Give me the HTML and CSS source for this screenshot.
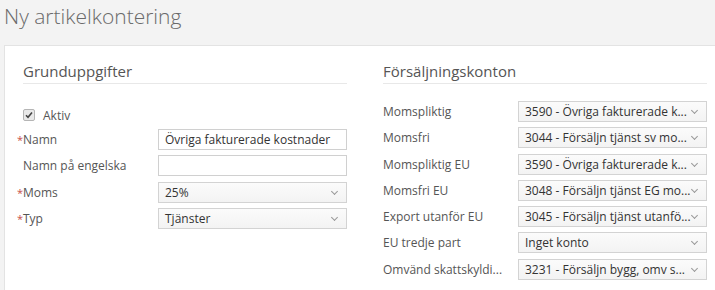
FILE: index.html
```html
<!DOCTYPE html>
<html lang="sv">
<head>
<meta charset="utf-8">
<title>Ny artikelkontering</title>
<link rel="stylesheet" href="styles.css">
</head>
<body>
<h1 class="page-title">Ny artikelkontering</h1>
<div class="panel">
  <div class="cols">
    <section class="col">
      <h2 class="section-title">Grunduppgifter</h2>
      <label class="check-row"><span class="checkbox"><svg width="8" height="8" viewBox="0 0 8 8"><path d="M1 4.2 L3 6.2 L7 1.5" fill="none" stroke="#444" stroke-width="1.6"/></svg></span>Aktiv</label>
      <div class="row"><span class="label req">Namn</span><span class="input">Övriga fakturerade kostnader</span></div>
      <div class="row"><span class="label">Namn på engelska</span><span class="input"></span></div>
      <div class="row"><span class="label req">Moms</span><span class="select">25%</span></div>
      <div class="row"><span class="label req">Typ</span><span class="select">Tjänster</span></div>
    </section>
    <section class="col">
      <h2 class="section-title">Försäljningskonton</h2>
      <div class="rows-right">
        <div class="row"><span class="label">Momspliktig</span><span class="select">3590 - Övriga fakturerade k...</span></div>
        <div class="row"><span class="label">Momsfri</span><span class="select">3044 - Försäljn tjänst sv mo...</span></div>
        <div class="row"><span class="label">Momspliktig EU</span><span class="select">3590 - Övriga fakturerade k...</span></div>
        <div class="row"><span class="label">Momsfri EU</span><span class="select">3048 - Försäljn tjänst EG mo...</span></div>
        <div class="row"><span class="label">Export utanför EU</span><span class="select">3045 - Försäljn tjänst utanfö...</span></div>
        <div class="row"><span class="label">EU tredje part</span><span class="select">Inget konto</span></div>
        <div class="row"><span class="label">Omvänd skattskyldi...</span><span class="select">3231 - Försäljn bygg, omv s...</span></div>
      </div>
    </section>
  </div>
</div>
</body>
</html>
```
FILE: styles.css
```css
html, body { margin: 0; padding: 0; }
body {
  background: #f3f3f3;
  font-family: "Open Sans", "Liberation Sans", sans-serif;
  color: #555;
  width: 715px;
  height: 290px;
  overflow: hidden;
}
.page-title {
  margin: 0;
  padding: 2px 0 0 4px;
  height: 45px;
  box-sizing: border-box;
  font-size: 21px;
  font-weight: 300;
  color: #6a6a6a;
  line-height: 28px;
}
.panel {
  margin-left: 4px;
  margin-right: -20px;
  background: #fff;
  border: 1px solid #e3e3e3;
  height: 245px;
  box-sizing: border-box;
  padding: 15px 18px 0 18px;
  overflow: hidden;
  border-bottom: 0;
}
.cols {
  display: flex;
  gap: 36px;
  width: 684px;
}
.col { width: 324px; }
.section-title {
  margin: 0;
  font-size: 15px;
  font-weight: 400;
  color: #555;
  line-height: 20px;
  padding-bottom: 2px;
  border-bottom: 1px solid #e8e8e8;
}
.check-row {
  display: flex;
  align-items: center;
  font-size: 12px;
  margin-top: 21px;
  height: 20px;
  color: #555;
}
.checkbox {
  width: 10px;
  height: 10px;
  border: 1px solid #b5b5b5;
  border-radius: 2px;
  background: #e9e9e9;
  display: inline-flex;
  align-items: center;
  justify-content: center;
  margin-right: 8px;
  box-sizing: content-box;
}
.row {
  display: flex;
  align-items: center;
  height: 21px;
  margin-top: 5.3px;
  font-size: 12px;
}
.check-row + .row { margin-top: 4px; }
.rows-right { margin-top: 17px; }
.rows-right .row:first-child { margin-top: 0; }
.label {
  width: 135px;
  color: #555;
  white-space: nowrap;
  position: relative;
}
.label.req::before {
  content: "*";
  color: #c8504a;
  font-size: 11px;
  position: absolute;
  left: -6px;
  top: 1px;
}
.input, .select {
  width: 189px;
  height: 21px;
  box-sizing: border-box;
  border: 1px solid #d0d0d0;
  padding: 0 6px;
  line-height: 19px;
  color: #333;
  font-size: 12px;
  white-space: nowrap;
  overflow: hidden;
  background: #fff;
}
.select {
  background: linear-gradient(#fbfbfb, #f3f3f3);
  position: relative;
  padding-right: 24px;
  border-color: #d3d3d3;
}
.select::after {
  content: "";
  position: absolute;
  right: 9px;
  top: 6px;
  width: 4px;
  height: 4px;
  border-right: 1px solid #999;
  border-bottom: 1px solid #999;
  transform: rotate(45deg);
}
```
